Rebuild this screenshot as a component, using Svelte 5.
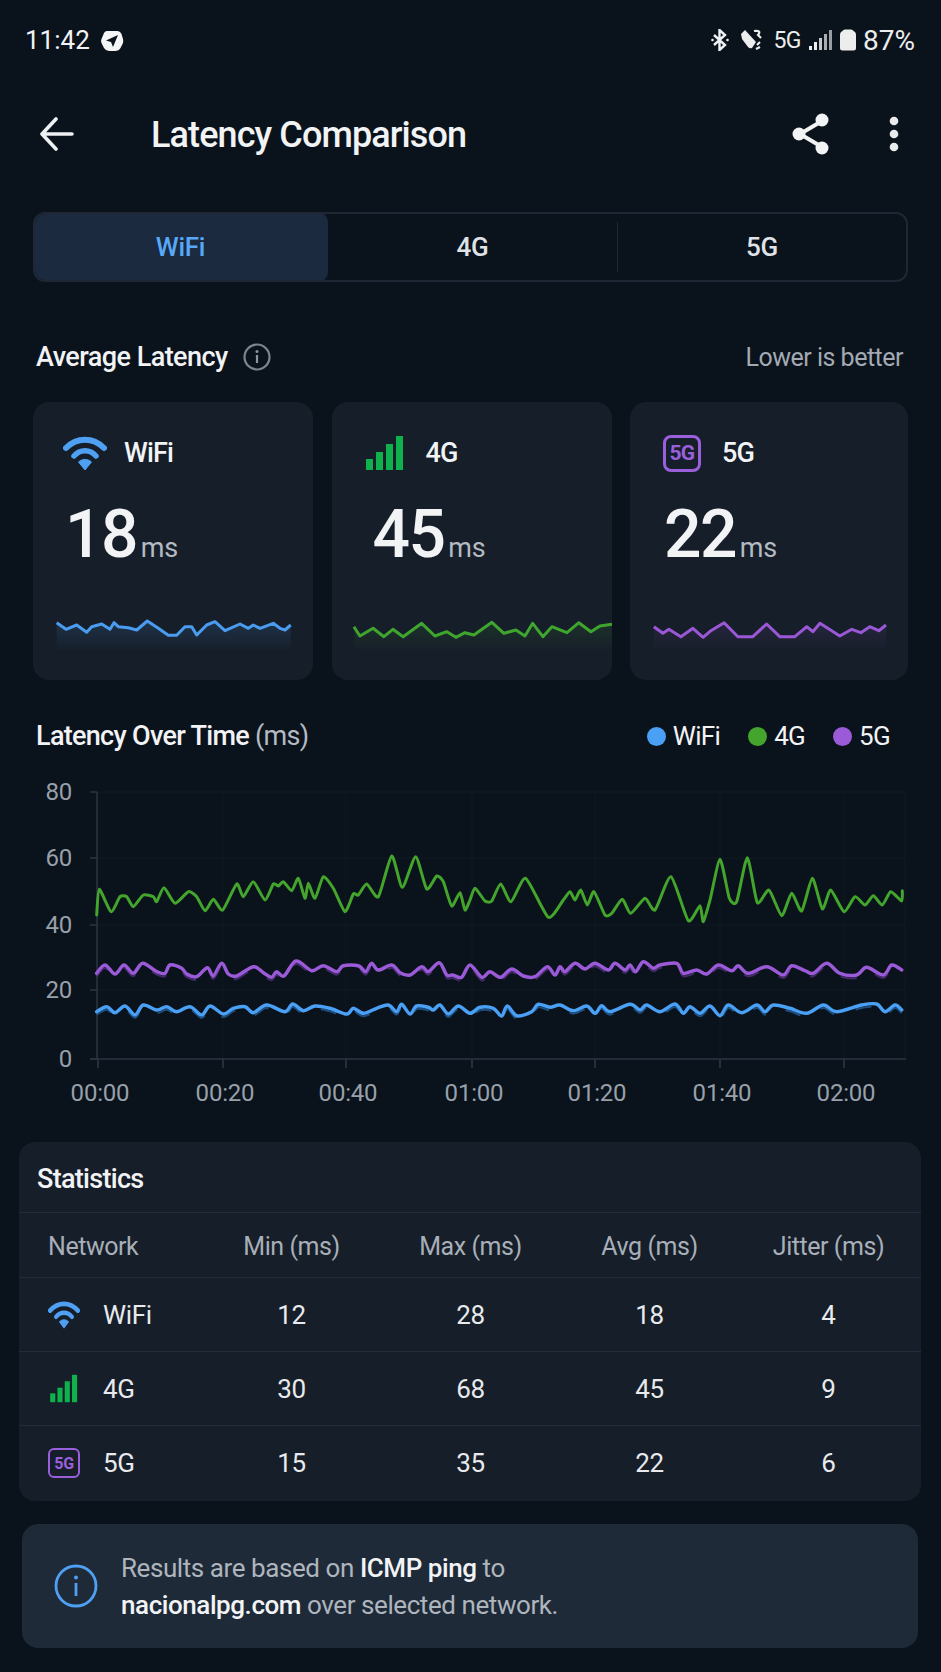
<script lang="ts">
  // zoom-space points for the chart: x = zx / 3 (+ 470 for the right half), y = 700 + zy / 3
  const left = (pts: number[][]) => pts.map(([x, y]) => [x / 3, 700 + y / 3])
  const right = (pts: number[][]) => pts.map(([x, y]) => [470 + x / 3, 700 + y / 3])
  const toPath = (pts: number[][]) => pts.map(([x, y]) => `${x.toFixed(1)},${y.toFixed(1)}`).join(' ')

  // catmull-rom through the points, the chart lines are soft rather than jagged
  function smooth(pts: number[][], k = 0.16) {
    let d = `M${pts[0][0].toFixed(1)} ${pts[0][1].toFixed(1)}`
    for (let i = 0; i < pts.length - 1; i++) {
      const p0 = pts[i - 1] ?? pts[i]
      const p1 = pts[i]
      const p2 = pts[i + 1]
      const p3 = pts[i + 2] ?? p2
      const c1x = p1[0] + (p2[0] - p0[0]) * k
      const c1y = p1[1] + (p2[1] - p0[1]) * k
      const c2x = p2[0] - (p3[0] - p1[0]) * k
      const c2y = p2[1] - (p3[1] - p1[1]) * k
      d += ` C${c1x.toFixed(1)} ${c1y.toFixed(1)} ${c2x.toFixed(1)} ${c2y.toFixed(1)} ${p2[0].toFixed(1)} ${p2[1].toFixed(1)}`
    }
    return d
  }

  const green = [
    ...left([[290,645],[298,568],[333,635],[360,590],[380,590],[400,620],[430,585],[460,590],[470,605],[492,563],[525,610],[565,575],[590,590],[615,632],[640,598],[668,630],[710,552],[730,590],[760,545],[795,600],[820,552],[835,558],[850,545],[875,572],[895,535],[915,595],[925,550],[945,595],[970,530],[1000,565],[1035,635],[1060,582],[1075,585],[1100,552],[1135,590],[1175,468],[1207,562],[1247,470],[1280,567],[1310,528],[1330,545],[1355,618],[1380,578],[1395,630]]),
    ...right([[0,600],[15,565],[45,603],[65,603],[92,552],[123,605],[167,535],[235,652],[280,600],[300,575],[315,600],[332,570],[352,615],[372,575],[405,645],[425,640],[457,598],[482,640],[525,595],[555,630],[603,530],[655,662],[690,617],[700,665],[720,600],[750,478],[778,595],[800,605],[832,473],[862,608],[897,570],[935,647],[965,580],[995,633],[1027,535],[1057,627],[1082,570],[1122,635],[1155,590],[1185,615],[1210,587],[1237,615],[1262,575],[1295,603],[1297,572]])
  ]
  const purple = [
    ...left([[290,820],[315,795],[345,822],[372,795],[400,820],[428,790],[470,815],[495,820],[510,795],[545,805],[560,822],[590,830],[622,803],[640,828],[665,790],[685,822],[710,828],[760,800],[790,818],[815,832],[830,815],[852,828],[888,783],[935,812],[970,797],[1010,815],[1030,797],[1075,797],[1097,815],[1115,790],[1135,810],[1175,795],[1200,818],[1230,825],[1265,800],[1285,815],[1318,788],[1340,825],[1358,825],[1385,832]]),
    ...right([[0,795],[35,832],[60,815],[92,832],[125,807],[160,828],[195,830],[232,800],[255,825],[270,800],[285,815],[315,790],[345,807],[375,790],[415,810],[435,790],[465,810],[480,795],[497,815],[520,785],[550,805],[570,795],[620,790],[640,820],[680,810],[710,822],[745,795],[785,812],[805,797],[835,820],[890,800],[940,825],[965,797],[1005,812],[1030,820],[1070,790],[1110,820],[1160,825],[1190,802],[1240,825],[1265,795],[1295,810]])
  ]
  const blue = [
    ...left([[290,935],[320,920],[345,938],[375,918],[405,945],[430,915],[470,930],[500,920],[530,935],[570,920],[605,945],[630,918],[670,942],[700,925],[735,920],[760,938],[800,915],[855,935],[878,912],[910,932],[945,918],[990,925],[1040,942],[1060,925],[1090,940],[1130,925],[1165,915],[1190,935],[1205,913],[1230,942],[1250,918],[1285,922],[1300,930],[1320,915],[1345,942],[1375,918]]),
    ...right([[0,940],[30,922],[70,925],[95,948],[112,918],[140,947],[185,935],[205,913],[240,922],[270,915],[310,932],[350,918],[375,940],[395,917],[420,935],[480,913],[510,930],[530,915],[570,935],[615,912],[640,940],[660,920],[690,940],[720,918],[750,947],[775,915],[815,938],[860,915],[885,935],[910,915],[960,925],[1010,940],[1060,915],[1100,935],[1175,915],[1220,912],[1245,935],[1275,915],[1295,930]])
  ]

  const series = [
    { color: '#43a52c', d: smooth(green, 0.1), width: 3 },
    { color: '#9b5bd8', d: smooth(purple), width: 3.5 },
    { color: '#4aa0f5', d: smooth(blue), width: 3.5 }
  ]

  const yTicks = [[80, 792], [60, 858], [40, 925], [20, 990], [0, 1059]]
  const xTicks = [['00:00', 98], ['00:20', 223], ['00:40', 346], ['01:00', 472], ['01:20', 595], ['01:40', 720], ['02:00', 844]]

  // sparkline points are in card-local px, y relative to the card top
  const sparkBlue = [[80,668],[108,688],[140,675],[170,697],[185,680],[215,672],[240,688],[252,668],[265,680],[295,683],[320,690],[352,663],[385,685],[415,706],[440,706],[465,680],[485,680],[500,705],[530,675],[555,665],[585,692],[630,672],[655,685],[670,675],[690,685],[730,670],[750,685],[765,690],[782,675]]
    .map(([x, y]) => [30 + x / 3 - 33, 400 + y / 3 - 402])
  const fromZoom2 = (cardX: number) => (p: number[]) => [p[0] / 1.667 - cardX, 320 + p[1] / 3 - 402]
  const sparkGreen = [[590,920],[600,948],[622,925],[640,950],[655,928],[672,950],[703,910],[725,948],[745,935],[760,952],[775,938],[790,945],[820,907],[840,940],[860,930],[875,948],[888,910],[905,950],[920,920],[945,938],[965,908],[985,935],[1000,918],[1020,913]].map(fromZoom2(332))
  const sparkPurple = [[1090,920],[1105,940],[1115,928],[1135,950],[1155,925],[1172,952],[1185,932],[1207,908],[1230,950],[1255,950],[1278,912],[1300,950],[1325,950],[1345,920],[1355,935],[1367,910],[1400,948],[1420,928],[1435,938],[1450,920],[1465,932],[1477,915]].map(fromZoom2(630))

  const cards = [
    { id: 'wifi', name: 'WiFi', value: 18, color: '#4a9cf0', fill: 'url(#fade-blue)', pts: sparkBlue },
    { id: 'g4', name: '4G', value: 45, color: '#3fa52e', fill: 'url(#fade-green)', pts: sparkGreen },
    { id: 'g5', name: '5G', value: 22, color: '#9a58d6', fill: 'url(#fade-purple)', pts: sparkPurple }
  ]

  const rows = [
    { id: 'wifi', name: 'WiFi', cells: [12, 28, 18, 4] },
    { id: 'g4', name: '4G', cells: [30, 68, 45, 9] },
    { id: 'g5', name: '5G', cells: [15, 35, 22, 6] }
  ]

  const areaPath = (pts: number[][]) =>
    `${toPath(pts)} ${pts[pts.length - 1][0].toFixed(1)},248 ${pts[0][0].toFixed(1)},248`
</script>

{#snippet netIcon(id: string)}
  {#if id === 'wifi'}
    <svg class="net-icon" viewBox="0 0 44 36" preserveAspectRatio="none" aria-hidden="true">
      <path d="M3 13 C14 2 30 2 41 13" fill="none" stroke="#4f9ff2" stroke-width="6" stroke-linecap="round" />
      <path d="M11 21 C17 14 27 14 33 21" fill="none" stroke="#4f9ff2" stroke-width="5.5" stroke-linecap="round" />
      <path d="M15.5 27 C19 23.5 25 23.5 28.5 27 L22 35 Z" fill="#4f9ff2" stroke="#4f9ff2" stroke-linejoin="round" />
    </svg>
  {:else if id === 'g4'}
    <svg class="net-icon" viewBox="0 0 44 36" preserveAspectRatio="none" aria-hidden="true">
      <rect x="3" y="24" width="7" height="11" fill="#0fb14c" />
      <rect x="13" y="17" width="7" height="18" fill="#0fb14c" />
      <rect x="23" y="9" width="7" height="26" fill="#0fb14c" />
      <rect x="33" y="1" width="7" height="34" fill="#0fb14c" />
    </svg>
  {:else}
    <span class="net-icon badge">5G</span>
  {/if}
{/snippet}

<div class="page">
  <div class="status">
    <div class="status-left">
      <span class="time">11:42</span>
      <svg width="24" height="24" viewBox="0 0 24 24" aria-hidden="true">
        <path d="M7 3 H17 Q20 3 21.5 6 L23 11 Q23.5 13 23 15 L20.5 20 Q19 23 15 23 H10 Q6 23 4 20 L1.5 15 Q0.5 13 1.500 11 L4 5 Q5 3 7 3 Z" fill="#f4f5f6" />
        <path d="M18 7 L6 12.500 L11 14 L13 19 Z" fill="#0b131d" />
      </svg>
    </div>
    <div class="status-right">
      <svg width="18" height="22" viewBox="0 0 18 22" aria-hidden="true">
        <path d="M3 6 L14 16 L8.500 21 V1 L14 6 L3 16" fill="none" stroke="#f0f1f2" stroke-width="2.400" />
        <circle cx="1.500" cy="11" r="1.300" fill="#f0f1f2" />
        <circle cx="16.500" cy="11" r="1.300" fill="#f0f1f2" />
      </svg>
      <svg class="mute" width="23" height="22" viewBox="0 0 23 22" aria-hidden="true">
        <path d="M1 5 L5 1 L16 13 L12 19 Q10 20 8 18 L2 10 Z" fill="#eceded" />
        <path d="M14 2 Q22 1 18 6 L21 9 M20 13 L17 16 M20 18 L16 20" fill="none" stroke="#eceded" stroke-width="2.200" />
      </svg>
      <span class="net">5G</span>
      <svg width="23" height="22" viewBox="0 0 23 22" aria-hidden="true">
        <rect x="0" y="17" width="3" height="4" fill="#eceded" />
        <rect x="5" y="13" width="3" height="8" fill="#eceded" />
        <rect x="10" y="9" width="3" height="12" fill="#c4c7ca" />
        <rect x="15" y="5" width="3" height="16" fill="#a9adb1" />
        <rect x="20" y="1" width="3" height="20" fill="#9a9ea3" />
      </svg>
      <svg class="battery" width="16" height="22" viewBox="0 0 16 22" aria-hidden="true">
        <path d="M5 0.500 H11 Q13 0.500 13.500 2 L15 3 Q16 4 16 6 V19 Q16 21.500 13.500 21.500 H2.500 Q0 21.500 0 19 V6 Q0 4 1 3 L2.500 2 Q3 0.500 5 0.500 Z" fill="#eceded" />
      </svg>
      <span class="pct">87%</span>
    </div>
  </div>

  <header class="appbar">
    <svg class="back" width="34" height="34" viewBox="0 0 34 34" aria-hidden="true">
      <path d="M32 17 H3 M16 2 L2 17 L16 32" fill="none" stroke="#eef0f2" stroke-width="3.600" stroke-linecap="round" stroke-linejoin="round" />
    </svg>
    <h1>Latency Comparison</h1>
    <svg class="share" width="38" height="42" viewBox="0 0 38 42" aria-hidden="true">
      <path d="M30 8 L8 21 L30 34" fill="none" stroke="#f2f3f4" stroke-width="4" />
      <circle cx="30" cy="7" r="6.500" fill="#f2f3f4" />
      <circle cx="7" cy="21" r="6.500" fill="#f2f3f4" />
      <circle cx="30" cy="35" r="6.500" fill="#f2f3f4" />
    </svg>
    <svg class="kebab" width="10" height="36" viewBox="0 0 10 36" aria-hidden="true">
      <circle cx="5" cy="5" r="4.300" fill="#e8eaec" />
      <circle cx="5" cy="18" r="4.300" fill="#e8eaec" />
      <circle cx="5" cy="31" r="4.300" fill="#e8eaec" />
    </svg>
  </header>

  <div class="seg">
    <div class="seg-item active">WiFi</div>
    <div class="seg-item">4G</div>
    <div class="seg-item divided">5G</div>
  </div>

  <div class="section-head">
    <h2>Average Latency</h2>
    <svg class="info" width="28" height="28" viewBox="0 0 28 28" aria-hidden="true">
      <circle cx="14" cy="14" r="12.500" fill="none" stroke="#7d858f" stroke-width="2.200" />
      <circle cx="14" cy="8.500" r="1.500" fill="#8d949d" />
      <path d="M14 12 V20" stroke="#8d949d" stroke-width="2.200" />
    </svg>
    <span class="hint">Lower is better</span>
  </div>

  <div class="cards">
    {#each cards as card}
      <div class="card {card.id}">
        <div class="card-label">
          {@render netIcon(card.id)}
          <span>{card.name}</span>
        </div>
        <div class="card-value">{card.value}<small>ms</small></div>
        <svg class="spark" viewBox="0 200 281 60" aria-hidden="true">
          <defs>
            <linearGradient id="fade-blue" x1="0" y1="0" x2="0" y2="1">
              <stop offset="0" stop-color="#4a9cf0" stop-opacity="0.16" />
              <stop offset="1" stop-color="#4a9cf0" stop-opacity="0.01" />
            </linearGradient>
            <linearGradient id="fade-green" x1="0" y1="0" x2="0" y2="1">
              <stop offset="0" stop-color="#3fa52e" stop-opacity="0.14" />
              <stop offset="1" stop-color="#3fa52e" stop-opacity="0.01" />
            </linearGradient>
            <linearGradient id="fade-purple" x1="0" y1="0" x2="0" y2="1">
              <stop offset="0" stop-color="#9a58d6" stop-opacity="0.12" />
              <stop offset="1" stop-color="#9a58d6" stop-opacity="0.01" />
            </linearGradient>
          </defs>
          <polygon points={areaPath(card.pts)} fill={card.fill} />
          <polyline points={toPath(card.pts)} fill="none" stroke={card.color} stroke-width="3" stroke-linejoin="round" />
        </svg>
      </div>
    {/each}
  </div>

  <div class="chart-head">
    <h2>Latency Over Time <span>(ms)</span></h2>
    <div class="legend">
      <i class="dot" style="background:#4aa0f5"></i><span class="l-wifi">WiFi</span>
      <i class="dot" style="background:#43a52c"></i><span class="l-4g">4G</span>
      <i class="dot" style="background:#9b5bd8"></i><span>5G</span>
    </div>
  </div>

  <svg class="chart" viewBox="0 756 941 364" aria-label="Latency over time chart">
    {#each yTicks as [label, y]}
      {#if y !== 1059}
        <line x1="97" x2="905" y1={y} y2={y} stroke="#ffffff" stroke-opacity="0.03" />
      {/if}
      <line x1="90" x2="97" y1={y} y2={y} stroke="#2b3441" stroke-width="1.500" />
      <text class="tick" x="72" y={y + 8} text-anchor="end">{label}</text>
    {/each}
    {#each xTicks as [label, x]}
      <line x1={x} x2={x} y1="792" y2="1059" stroke="#ffffff" stroke-opacity="0.025" />
      <line x1={x} x2={x} y1="1059" y2="1068" stroke="#2f3844" stroke-width="1.500" />
      <text class="tick" x={+x + 2} y="1101" text-anchor="middle">{label}</text>
    {/each}
    <line x1="905" x2="905" y1="792" y2="1059" stroke="#ffffff" stroke-opacity="0.03" />
    <line x1="97" x2="97" y1="792" y2="1059" stroke="#2b3441" stroke-width="1.500" />
    <line x1="90" x2="906" y1="1059" y2="1059" stroke="#2b3441" stroke-width="1.500" />
    {#each series as s}
      <path d={s.d} fill="none" stroke={s.color} stroke-width={s.width} stroke-linejoin="round" stroke-linecap="round" />
    {/each}
    <path d={smooth(blue)} class="ghost" stroke="#2f7fd0" transform="translate(0 3)" />
    <path d={smooth(purple)} class="ghost" stroke="#6f3fa8" transform="translate(0 3)" />
  </svg>

  <section class="stats">
    <h3>Statistics</h3>
    <div class="stats-row header">
      <div class="name">Network</div>
      <div>Min (ms)</div>
      <div>Max (ms)</div>
      <div>Avg (ms)</div>
      <div>Jitter (ms)</div>
    </div>
    {#each rows as row}
      <div class="stats-row {row.id}">
        <div class="name">
          {@render netIcon(row.id)}
          <span>{row.name}</span>
        </div>
        {#each row.cells as cell}
          <div>{cell}</div>
        {/each}
      </div>
    {/each}
  </section>

  <div class="note">
    <svg width="44" height="44" viewBox="0 0 44 44" aria-hidden="true">
      <circle cx="22" cy="22" r="20" fill="none" stroke="#4f9ff2" stroke-width="2.800" />
      <circle cx="22" cy="13.500" r="2" fill="#4f9ff2" />
      <path d="M22 19 V32" stroke="#4f9ff2" stroke-width="2.800" />
    </svg>
    <p>Results are based on <b>ICMP ping</b> to<br /><b>nacionalpg.com</b> over selected network.</p>
  </div>
</div>

<style>
  :global(body) {
    background: #0a121c;
  }

  .page {
    width: 941px;
    height: 1672px;
    overflow: hidden;
    background: #0a121c;
    color: #f2f3f5;
    font-family: Roboto, "Noto Sans", sans-serif;
  }

  h1, h2, h3, p {
    margin: 0;
    font-weight: inherit;
  }

  .status {
    height: 80px;
    padding: 0 26px 0 25px;
    display: flex;
    align-items: center;
    justify-content: space-between;
  }

  .status-left, .status-right {
    display: flex;
    align-items: center;
  }

  .status-left {
    gap: 10px;
    font-size: 26px;
  }

  .status-right {
    color: #eceded;
  }

  .status-right .mute {
    margin-left: 11px;
  }

  .status-right .net {
    margin-left: 10px;
    font-size: 23px;
    letter-spacing: -0.5px;
  }

  .status-right .net + svg {
    margin-left: 8px;
  }

  .status-right .battery {
    margin-left: 8px;
  }

  .status-right .pct {
    margin-left: 7px;
    font-size: 28px;
  }

  .appbar {
    height: 108px;
    padding: 2px 42px 0 40px;
    box-sizing: border-box;
    display: flex;
    align-items: center;
  }

  .appbar .back,
  .appbar .share,
  .appbar .kebab {
    margin-top: -2px;
  }

  .appbar h1 {
    margin-left: 77px;
    font-size: 36px;
    font-weight: 500;
    letter-spacing: -0.9px;
    flex: 1;
  }

  .appbar .kebab {
    margin-left: 59px;
  }

  .seg {
    margin: 24px 33px 0;
    height: 70px;
    box-sizing: border-box;
    border: 2px solid #1e2733;
    border-radius: 12px;
    display: grid;
    grid-template-columns: 293px 1fr 1fr;
    overflow: hidden;
    font-size: 26px;
    font-weight: 500;
    letter-spacing: -0.3px;
    color: #dfe2e6;
  }

  .seg-item {
    display: flex;
    align-items: center;
    justify-content: center;
    position: relative;
  }

  .seg-item.active {
    background: #1b2a3e;
    color: #58a8f7;
    border-radius: 0 10px 10px 0;
    margin: -2px 0 -2px -2px;
  }

  .seg-item.divided {
    border-left: 1px solid #1e2733;
    margin: 8px 0;
  }

  .section-head {
    margin: 50px 38px 0 36px;
    height: 50px;
    display: flex;
    align-items: center;
  }

  .section-head h2 {
    font-size: 27px;
    font-weight: 500;
    letter-spacing: -0.55px;
  }

  .section-head .info {
    margin-left: 15px;
  }

  .hint {
    margin-left: auto;
    font-size: 25px;
    letter-spacing: -0.5px;
    color: #a3aab3;
  }

  .cards {
    margin: 20px 33px 0;
    display: grid;
    grid-template-columns: 280px 280px 278px;
    gap: 18.500px;
  }

  .card {
    height: 278px;
    background: #161e29;
    border-radius: 16px;
    overflow: hidden;
  }

  .card-label {
    height: 36px;
    margin-top: 33px;
    padding-left: 30px;
    display: flex;
    align-items: center;
    gap: 17px;
    font-size: 27px;
    font-weight: 500;
    letter-spacing: -0.8px;
  }

  .card.g4 .card-label {
    padding-left: 31px;
    gap: 19px;
  }

  .card.g5 .card-label {
    padding-left: 33px;
    gap: 21px;
  }

  .card-value {
    margin: 27px 0 0 32px;
    height: 74px;
    font-size: 66px;
    font-weight: 500;
    line-height: 74px;
    letter-spacing: -1.6px;
  }

  .card.g4 .card-value {
    margin-left: 41px;
  }

  .card.g5 .card-value {
    margin-left: 34px;
  }

  .card-value small {
    margin-left: 4px;
    font-size: 27px;
    font-weight: 400;
    letter-spacing: -0.3px;
    color: #b4bac2;
  }

  .spark {
    display: block;
    margin-top: 30px;
    width: 281px;
    height: 60px;
  }

  .net-icon {
    width: 44px;
    height: 36px;
    flex: none;
  }

  .badge {
    box-sizing: border-box;
    width: 38px;
    height: 37px;
    border: 3px solid #9a5fdc;
    border-radius: 8px;
    display: flex;
    align-items: center;
    justify-content: center;
    font-size: 21px;
    font-weight: 700;
    color: #9a5fdc;
  }

  .chart-head {
    margin: 36px 51px 0 36px;
    height: 40px;
    display: flex;
    align-items: center;
    justify-content: space-between;
  }

  .chart-head h2 {
    font-size: 27px;
    font-weight: 500;
    letter-spacing: -0.7px;
  }

  .chart-head h2 span {
    font-weight: 400;
    color: #b4bac2;
  }

  .legend {
    display: flex;
    align-items: center;
    font-size: 26px;
    letter-spacing: -0.7px;
  }

  .dot {
    width: 19px;
    height: 19px;
    border-radius: 50%;
    margin-right: 7px;
  }

  .l-wifi, .l-4g {
    margin-right: 28px;
  }

  .chart {
    display: block;
    width: 941px;
    height: 364px;
  }

  .tick {
    font-size: 24px;
    letter-spacing: -0.2px;
    fill: #98a0aa;
  }

  .ghost {
    fill: none;
    stroke-width: 2;
    stroke-dasharray: 16 22;
    opacity: 0.55;
  }

  .stats {
    margin: 22px 20px 0 19px;
    height: 359px;
    background: #161e29;
    border-radius: 16px;
    overflow: hidden;
  }

  .stats h3 {
    padding: 3px 0 0 18px;
    box-sizing: border-box;
    height: 71px;
    display: flex;
    align-items: center;
    font-size: 27px;
    font-weight: 500;
    letter-spacing: -0.7px;
    border-bottom: 1px solid #222b37;
  }

  .stats-row {
    height: 74px;
    display: grid;
    grid-template-columns: 183px repeat(4, 179px);
    align-items: center;
    text-align: center;
    font-size: 26px;
    letter-spacing: -0.3px;
    color: #e8eaed;
    border-bottom: 1px solid #222b37;
    box-sizing: border-box;
  }

  .stats-row:last-child {
    border-bottom: 0;
  }

  .stats-row.header {
    height: 65px;
    padding-top: 3px;
    font-size: 25px;
    letter-spacing: -0.45px;
    color: #a8afb8;
  }

  .stats-row .name {
    padding-left: 29px;
    display: flex;
    align-items: center;
    gap: 23px;
    text-align: left;
  }

  .stats-row .net-icon {
    width: 32px;
    height: 29px;
  }

  .stats-row .badge {
    width: 32px;
    height: 30px;
    border-width: 2.500px;
    border-radius: 6px;
    font-size: 16px;
  }

  .note {
    margin: 23px 23px 0 22px;
    height: 124px;
    background: #1e2a38;
    border-radius: 16px;
    padding-left: 32px;
    display: flex;
    align-items: center;
    gap: 23px;
  }

  .note p {
    padding-top: 2px;
    font-size: 26px;
    letter-spacing: -0.43px;
    line-height: 37px;
    color: #aeb5bd;
  }

  .note b {
    font-weight: 500;
    color: #f2f3f5;
  }
</style>
